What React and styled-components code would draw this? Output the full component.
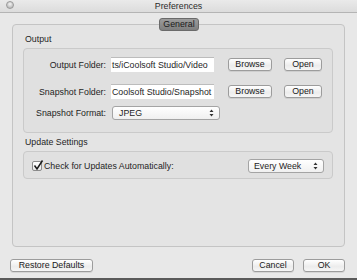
import React, { useState } from "react";
import styled, { createGlobalStyle } from "styled-components";

const Global = createGlobalStyle`
  html, body { margin: 0; padding: 0; }
  body {
    width: 357px;
    height: 280px;
    overflow: hidden;
    background: #e8e8e8;
    font-family: "Liberation Sans", Arial, sans-serif;
    color: #1e1e1e;
  }
`;

const Window = styled.div`
  width: 357px;
  height: 280px;
  box-sizing: border-box;
  display: flex;
  flex-direction: column;
  background: #e8e8e8;
  border-bottom: 2px solid #5a5a5a;
`;

const TitleBar = styled.div`
  height: 12px;
  flex: none;
  display: flex;
  align-items: center;
  justify-content: center;
  position: relative;
  background: linear-gradient(#eaeaea, #dcdcdc);
  border-bottom: 1px solid #b4b4b4;
  font-size: 8.8px;
  color: #2a2a2a;
`;

const CloseDot = styled.span`
  position: absolute;
  left: 6px;
  top: 1px;
  width: 8px;
  height: 8px;
  border-radius: 50%;
  background: radial-gradient(circle at 50% 35%, #f4f4f4, #a8a8a8);
  border: 1px solid #9a9a9a;
  box-sizing: border-box;
`;

const Body = styled.div`
  flex: 1;
  display: flex;
  flex-direction: column;
  padding-top: 11px;
`;

const TabBox = styled.div`
  height: 223px;
  margin: 0 12px;
  box-sizing: border-box;
  border: 1px solid #c4c4c4;
  border-radius: 4px;
  background: #e4e4e4;
  display: flex;
  flex-direction: column;
  padding: 0 11px 0 10px;
`;

const Tab = styled.div`
  align-self: center;
  margin-top: -7px;
  margin-left: 2px;
  width: 40px;
  height: 13px;
  box-sizing: border-box;
  border: 1px solid #6a6a6a;
  border-radius: 3px;
  background: linear-gradient(#9c9c9c, #7e7e7e);
  font-size: 8.8px;
  line-height: 11px;
  text-align: center;
  color: #1a1a1a;
`;

const SectionLabel = styled.div`
  font-size: 8.8px;
  line-height: 11px;
  margin: ${(p) => p.$top}px 0 3px 2px;
`;

const Group = styled.div`
  box-sizing: border-box;
  border: 1px solid #cacaca;
  border-radius: 4px;
  background: #e0e0e0;
  padding: ${(p) => p.$pad};
  display: flex;
  flex-direction: column;
`;

const Row = styled.div`
  display: flex;
  align-items: center;
  height: 15px;
  margin-top: ${(p) => p.$top || 0}px;
`;

const Label = styled.div`
  width: 82px;
  text-align: right;
  font-size: 8.8px;
  margin-right: 5px;
`;

const Field = styled.div`
  width: 103px;
  height: 15px;
  box-sizing: border-box;
  background: #fff;
  border-top: 1px solid #bcbcbc;
  font-size: 8.8px;
  line-height: 14px;
  padding-left: 1px;
  white-space: nowrap;
  overflow: hidden;
`;

const Button = styled.div`
  width: ${(p) => p.$w}px;
  height: 13px;
  box-sizing: border-box;
  margin-left: ${(p) => p.$ml || 0}px;
  border: 1px solid #9c9c9c;
  border-radius: 3px;
  background: linear-gradient(#ffffff, #ececec 60%, #f6f6f6);
  box-shadow: 0 1px 0 rgba(0, 0, 0, 0.08);
  font-size: 8.8px;
  line-height: 11px;
  text-align: center;
  color: #1a1a1a;
`;

const Popup = styled.div`
  width: ${(p) => p.$w}px;
  height: 14px;
  box-sizing: border-box;
  margin-left: ${(p) => p.$ml || 0}px;
  border: 1px solid #a4a4a4;
  border-radius: 3px;
  background: linear-gradient(#ffffff, #f0f0f0);
  display: flex;
  align-items: center;
  justify-content: space-between;
  padding: 0 5px 0 ${(p) => p.$pl || 6}px;
  font-size: 8.8px;
`;

const CheckRow = styled.label`
  display: flex;
  align-items: center;
  height: 14px;
  font-size: 8.8px;
`;

const Box = styled.span`
  width: 10px;
  height: 10px;
  box-sizing: border-box;
  border: 1px solid #8c8c8c;
  border-radius: 2px;
  background: linear-gradient(#fff, #e8e8e8);
  margin: 0 2px 0 8px;
  position: relative;
`;

const Footer = styled.div`
  display: flex;
  align-items: center;
  padding: 12px 12px 0 10px;
`;

const Spacer = styled.div`
  flex: 1;
`;

const PopupArrows = () => (
  <svg width="5" height="8" viewBox="0 0 5 8">
    <path d="M0.5 3 L2.5 0.5 L4.5 3 Z M0.5 5 L2.5 7.5 L4.5 5 Z" fill="#333" />
  </svg>
);

export default function App() {
  const [checked, setChecked] = useState(true);
  return (
    <>
      <Global />
      <Window>
        <TitleBar>
          <CloseDot />
          Preferences
        </TitleBar>
        <Body>
          <TabBox>
            <Tab>General</Tab>
            <SectionLabel $top={3}>Output</SectionLabel>
            <Group $pad="8px 0 12px 0">
              <Row>
                <Label>Output Folder:</Label>
                <Field>ts/iCoolsoft Studio/Video</Field>
                <Button $w={44} $ml={14}>Browse</Button>
                <Button $w={38} $ml={12}>Open</Button>
              </Row>
              <Row $top={12}>
                <Label>Snapshot Folder:</Label>
                <Field>Coolsoft Studio/Snapshot</Field>
                <Button $w={44} $ml={14}>Browse</Button>
                <Button $w={38} $ml={12}>Open</Button>
              </Row>
              <Row $top={6}>
                <Label>Snapshot Format:</Label>
                <Popup $w={108} $ml={1}>
                  JPEG
                  <PopupArrows />
                </Popup>
              </Row>
            </Group>
            <SectionLabel $top={4}>Update Settings</SectionLabel>
            <Group $pad="6px 8px 5px 0">
              <Row>
                <CheckRow onClick={() => setChecked(!checked)}>
                  <Box>
                    {checked && (
                      <svg width="11" height="11" viewBox="0 0 11 11" style={{ position: "absolute", left: 0, top: -2 }}>
                        <path d="M1.5 5.5 L4 9 L9.5 0.5" fill="none" stroke="#1a1a1a" strokeWidth="1.5" />
                      </svg>
                    )}
                  </Box>
                  Check for Updates Automatically:
                </CheckRow>
                <Spacer />
                <Popup $w={76} $pl={5}>
                  Every Week
                  <PopupArrows />
                </Popup>
              </Row>
            </Group>
          </TabBox>
          <Footer>
            <Button $w={83}>Restore Defaults</Button>
            <Spacer />
            <Button $w={42}>Cancel</Button>
            <Button $w={42} $ml={9}>OK</Button>
          </Footer>
        </Body>
      </Window>
    </>
  );
}
